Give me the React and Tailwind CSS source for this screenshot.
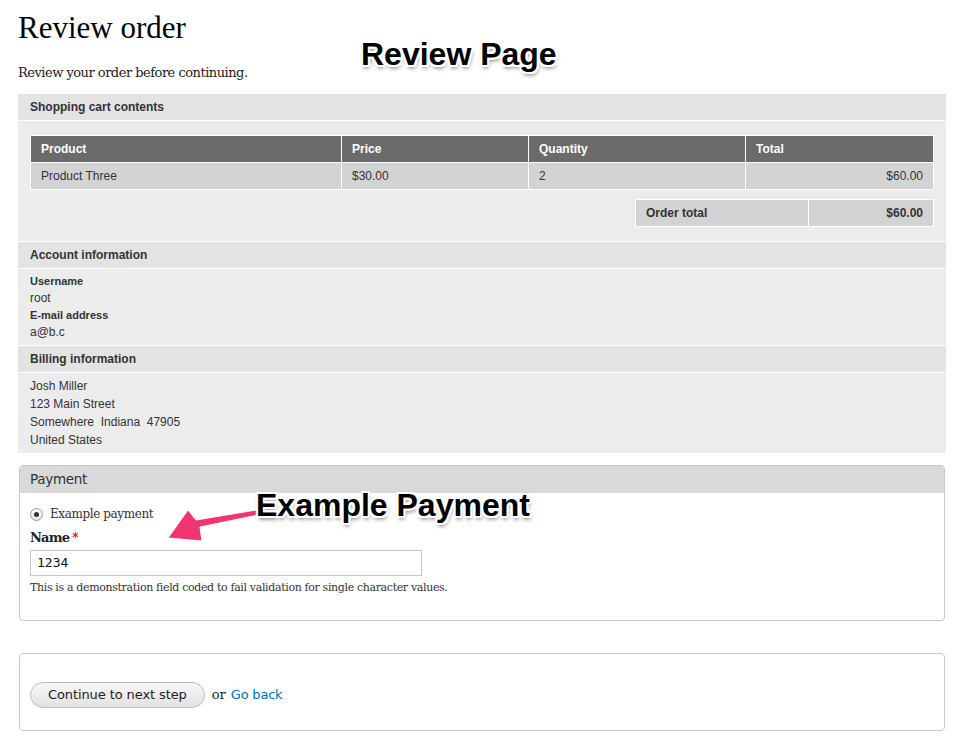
import React from 'react';

const sans = "font-['Liberation_Sans',Arial,sans-serif]";
const serif = "font-['DejaVu_Serif',Georgia,serif]";

const SectionHeader = ({ children }) => (
  <div className={`h-[27px] flex items-center px-3 bg-[#e3e3e3] border-t border-white text-[12px] font-bold text-[#333] ${sans}`}>
    {children}
  </div>
);

const Annotation = ({ children, className }) => (
  <div
    className={`absolute ${sans} font-bold text-[32px] leading-none text-black [text-shadow:-2px_-2px_0_#fff,2px_-2px_0_#fff,-2px_2px_0_#fff,2px_2px_0_#fff,0_-2px_0_#fff,0_2px_0_#fff,-2px_0_0_#fff,2px_0_0_#fff,1px_3px_4px_rgba(0,0,0,0.6)] ${className}`}
  >
    {children}
  </div>
);

export default function App() {
  return (
    <div className="relative w-[960px] h-[746px] bg-white overflow-hidden">
      <Annotation className="left-[361px] top-[38px]">Review Page</Annotation>

      <div className="pl-[18px] pr-[14px]">
        <h1 className={`font-['Liberation_Serif',Georgia,serif] text-[31px] leading-[32px] text-black pt-[12px]`}>Review order</h1>
        <p className={`${serif} text-[13px] leading-[20px] text-[#222] mt-[19px] tracking-[-0.5px]`}>Review your order before continuing.</p>

        {/* review panes */}
        <div className="mt-[11px] bg-[#ececec]">
          <div className={`h-[26px] flex items-center px-3 bg-[#e3e3e3] text-[12px] font-bold text-[#333] ${sans}`}>
            Shopping cart contents
          </div>
          <div className="border-t border-white px-3 pt-[14px] pb-[14px]">
            <table className={`w-full border-collapse text-[12px] ${sans} text-[#333]`}>
              <thead>
                <tr className="bg-[#6b6b6b] text-white h-[27px]">
                  <th className="text-left font-bold px-[10px] border border-white w-[311px]">Product</th>
                  <th className="text-left font-bold px-[10px] border border-white w-[187px]">Price</th>
                  <th className="text-left font-bold px-[10px] border border-white w-[217px]">Quantity</th>
                  <th className="text-left font-bold px-[10px] border border-white">Total</th>
                </tr>
              </thead>
              <tbody>
                <tr className="bg-[#d3d3d3] h-[27px]">
                  <td className="px-[10px] border border-white">Product Three</td>
                  <td className="px-[10px] border border-white">$30.00</td>
                  <td className="px-[10px] border border-white">2</td>
                  <td className="px-[10px] border border-white text-right">$60.00</td>
                </tr>
              </tbody>
            </table>
            <div className="flex justify-end mt-[9px]">
              <table className={`border-collapse text-[12px] font-bold ${sans} text-[#333]`}>
                <tbody>
                  <tr className="bg-[#d3d3d3] h-[27px]">
                    <td className="px-[10px] border border-white w-[173px]">Order total</td>
                    <td className="px-[10px] border border-white w-[125px] text-right">$60.00</td>
                  </tr>
                </tbody>
              </table>
            </div>
          </div>

          <SectionHeader>Account information</SectionHeader>
          <div className={`border-t border-white px-3 pt-[4px] pb-[4px] text-[12px] leading-[17px] text-[#333] ${sans}`}>
            <div className="text-[11px] font-bold">Username</div>
            <div>root</div>
            <div className="text-[11px] font-bold">E-mail address</div>
            <div>a@b.c</div>
          </div>

          <SectionHeader>Billing information</SectionHeader>
          <div className={`border-t border-white px-3 pt-[4px] pb-[4px] text-[12px] leading-[18px] text-[#333] ${sans}`}>
            <div>Josh Miller</div>
            <div>123 Main Street</div>
            <div>Somewhere&nbsp; Indiana&nbsp; 47905</div>
            <div>United States</div>
          </div>
        </div>

        {/* payment fieldset */}
        <div className="mt-[12px] ml-px mr-px border border-[#c8c8c8] rounded-[4px] overflow-hidden">
          <div className={`h-[27px] flex items-center px-[10px] bg-[#d9d9d9] text-[13.5px] text-[#333] font-['DejaVu_Sans',sans-serif] tracking-[-0.3px]`}>
            Payment
          </div>
          <div className="px-[10px] pt-[12px] pb-[23px]">
            <label className={`flex items-center gap-[7px] ${serif} text-[12px] text-[#333] tracking-[-0.4px]`}>
              <span className="w-[13px] h-[13px] rounded-full border border-[#9a9a9a] bg-gradient-to-b from-white to-[#e6e6e6] flex items-center justify-center">
                <span className="w-[5px] h-[5px] rounded-full bg-[#333]" />
              </span>
              Example payment
            </label>
            <div className={`mt-[6px] ${serif} text-[13px] font-bold text-[#222] leading-[18px] tracking-[-0.8px]`}>
              Name<span className="text-[#e00] text-[12px] align-top ml-[3px]">*</span>
            </div>
            <div className="mt-[3px] w-[392px] h-[26px] border border-[#c8c8c8] flex items-center px-[6px] font-['DejaVu_Sans_Mono',monospace] text-[13px] text-[#111]">
              1234
            </div>
            <p className={`mt-[4px] ${serif} text-[11px] text-[#333] tracking-[-0.35px]`}>
              This is a demonstration field coded to fail validation for single character values.
            </p>
          </div>
        </div>

        {/* actions fieldset */}
        <div className="mt-[32px] ml-px mr-px h-[78px] border border-[#c8c8c8] rounded-[4px] flex items-center px-[10px] pt-[6px] gap-[7px]">
          <button className="h-[26px] px-[17px] rounded-full border border-[#bdbdbd] bg-gradient-to-b from-[#f7f7f7] to-[#e2e2e2] text-[13px] text-[#222] font-['DejaVu_Sans',sans-serif] tracking-[-0.1px]">
            Continue to next step
          </button>
          <span className={`${serif} text-[13px] text-[#222]`}>or</span>
          <a className="-ml-[2px] text-[13px] text-[#0071b3] font-['DejaVu_Sans',sans-serif] tracking-[-0.2px]">Go back</a>
        </div>
      </div>

      {/* arrow + annotation over payment */}
      <svg className="absolute left-[158px] top-[503px]" width="110" height="45" viewBox="0 0 110 45">
        <polygon
          points="98,7 100,12 42,24 44,38 10,35 30,7 38,17"
          fill="#f2356e"
          stroke="#fff"
          strokeWidth="1"
          strokeLinejoin="round"
        />
      </svg>
      <Annotation className="left-[256px] top-[489px]">Example Payment</Annotation>
    </div>
  );
}
